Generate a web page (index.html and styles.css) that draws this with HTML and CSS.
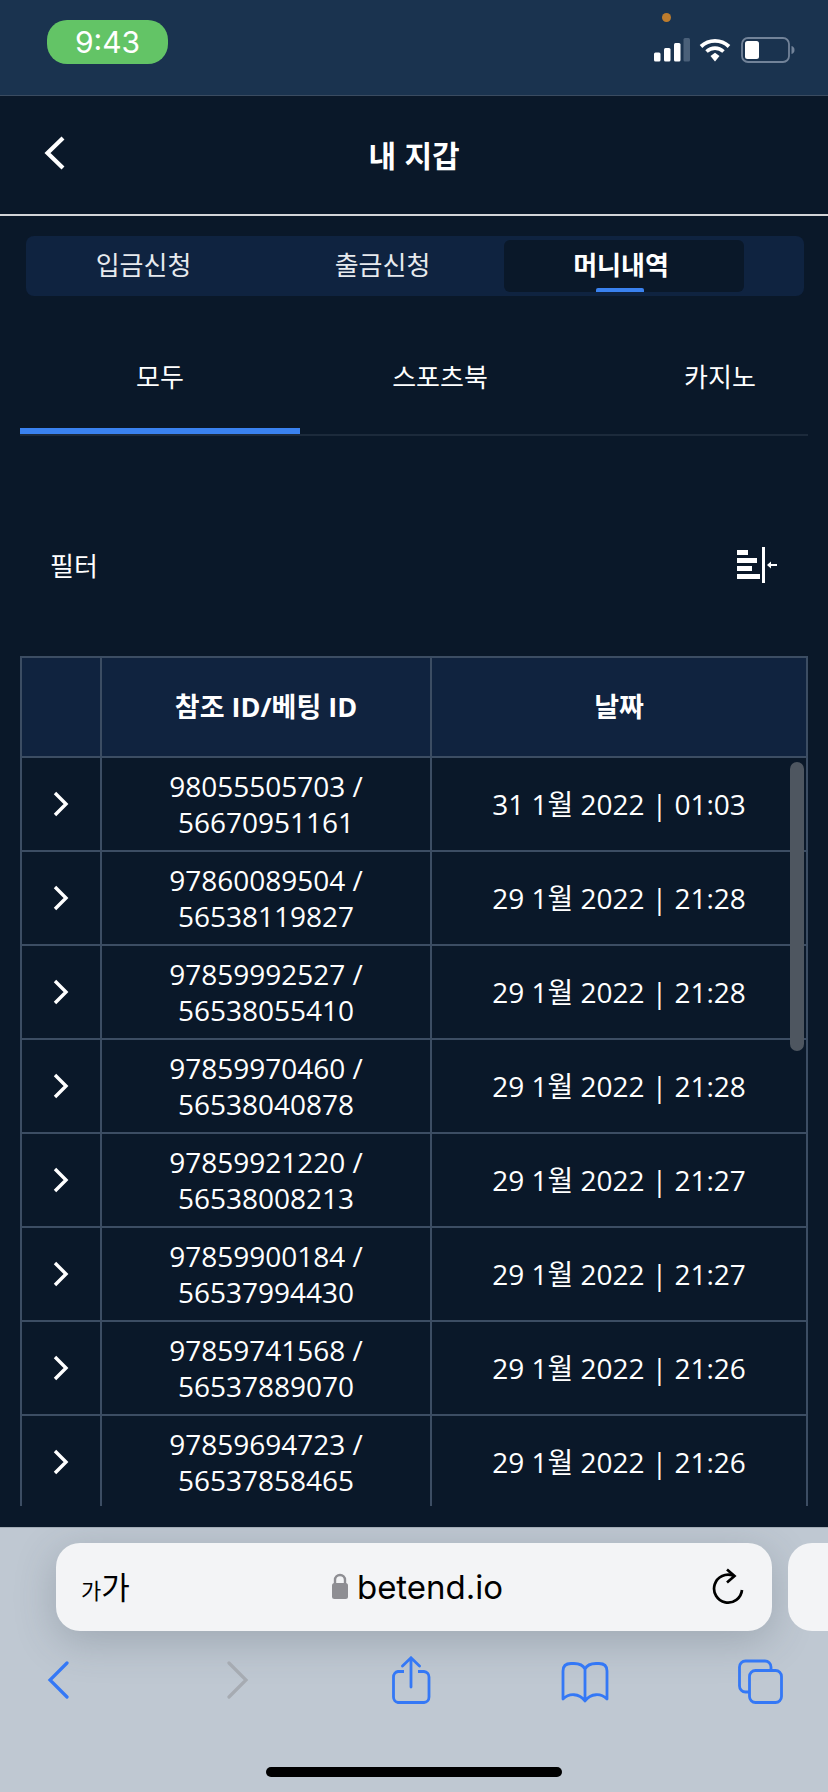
FILE: index.html
```html
<!DOCTYPE html>
<html lang="ko">
<head>
<meta charset="utf-8">
<title>내 지갑</title>
<link rel="stylesheet" href="styles.css">
</head>
<body>
<div class="page">
  <div class="status">
    <div class="time">9:43</div>
    <div class="status-right">
      <span class="mic-dot"></span>
      <div class="status-icons">
        <svg class="ic-signal" width="36" height="24" viewBox="0 0 36 24"><rect x="0" y="14.500" width="6.500" height="9" rx="1.500" fill="#fff"/><rect x="10" y="10" width="6.500" height="13.500" rx="1.500" fill="#fff"/><rect x="20" y="5" width="6.500" height="18.500" rx="1.500" fill="#fff"/><rect x="29.500" y="0" width="6.500" height="23.500" rx="1.500" fill="#4a6079"/></svg>
        <svg class="ic-wifi" width="32" height="24" viewBox="0 0 32 24"><path d="M2 8.500C10 1 22 1 30 8.500" fill="none" stroke="#fff" stroke-width="3.800"/><path d="M7.500 13.500C12.500 9 19.500 9 24.500 13.500" fill="none" stroke="#fff" stroke-width="3.600"/><path d="M11.500 18 16 14.800 20.500 18 16 23.500Z" fill="#fff"/></svg>
        <svg class="ic-batt" width="54" height="26" viewBox="0 0 54 26"><rect x="1" y="1" width="47" height="24" rx="6" fill="none" stroke="#728399" stroke-width="1.800"/><rect x="4" y="4" width="14" height="18" rx="2.500" fill="#fff"/><path d="M50.500 9c2 .5 3 2 3 4s-1 3.500-3 4z" fill="#728399"/></svg>
      </div>
    </div>
  </div>

  <header class="title-bar">
    <svg class="ic-back" width="22" height="34" viewBox="0 0 22 34"><path d="M19 2 3.500 17 19 32" fill="none" stroke="#fff" stroke-width="4.200"/></svg>
    <h1 class="title">내 지갑</h1>
  </header>

  <nav class="seg">
    <div class="seg-item">입금신청</div>
    <div class="seg-item">출금신청</div>
    <div class="seg-item seg-active">머니내역<span class="seg-mark"></span></div>
  </nav>

  <nav class="subtabs">
    <div class="subtab subtab-active">모두</div>
    <div class="subtab">스포츠북</div>
    <div class="subtab">카지노</div>
  </nav>

  <div class="filter">
    <span class="filter-label">필터</span>
    <svg class="ic-filter" width="40" height="36" viewBox="0 0 40 36"><g fill="#fff"><rect x="0" y="3" width="11" height="5"/><rect x="0" y="11" width="20" height="5"/><rect x="0" y="19" width="15" height="5"/><rect x="0" y="27" width="23" height="5"/><rect x="25" y="0" width="3" height="36"/><rect x="33" y="17" width="7" height="2"/><path d="M30 18 34 14.500V21.500Z"/></g></svg>
  </div>

  <div class="table-wrap">
    <table class="grid">
      <colgroup><col class="c1"><col class="c2"><col class="c3"></colgroup>
      <thead>
        <tr><th></th><th>참조 ID/베팅 ID</th><th>날짜</th></tr>
      </thead>
      <tbody>
        <tr><td><svg class="ic-row" width="16" height="26" viewBox="0 0 16 26"><path d="M2 2 13 13 2 24" fill="none" stroke="#fff" stroke-width="3.400"/></svg></td><td>98055505703 /<br>56670951161</td><td>31 1월 2022 | 01:03</td></tr>
        <tr><td><svg class="ic-row" width="16" height="26" viewBox="0 0 16 26"><path d="M2 2 13 13 2 24" fill="none" stroke="#fff" stroke-width="3.400"/></svg></td><td>97860089504 /<br>56538119827</td><td>29 1월 2022 | 21:28</td></tr>
        <tr><td><svg class="ic-row" width="16" height="26" viewBox="0 0 16 26"><path d="M2 2 13 13 2 24" fill="none" stroke="#fff" stroke-width="3.400"/></svg></td><td>97859992527 /<br>56538055410</td><td>29 1월 2022 | 21:28</td></tr>
        <tr><td><svg class="ic-row" width="16" height="26" viewBox="0 0 16 26"><path d="M2 2 13 13 2 24" fill="none" stroke="#fff" stroke-width="3.400"/></svg></td><td>97859970460 /<br>56538040878</td><td>29 1월 2022 | 21:28</td></tr>
        <tr><td><svg class="ic-row" width="16" height="26" viewBox="0 0 16 26"><path d="M2 2 13 13 2 24" fill="none" stroke="#fff" stroke-width="3.400"/></svg></td><td>97859921220 /<br>56538008213</td><td>29 1월 2022 | 21:27</td></tr>
        <tr><td><svg class="ic-row" width="16" height="26" viewBox="0 0 16 26"><path d="M2 2 13 13 2 24" fill="none" stroke="#fff" stroke-width="3.400"/></svg></td><td>97859900184 /<br>56537994430</td><td>29 1월 2022 | 21:27</td></tr>
        <tr><td><svg class="ic-row" width="16" height="26" viewBox="0 0 16 26"><path d="M2 2 13 13 2 24" fill="none" stroke="#fff" stroke-width="3.400"/></svg></td><td>97859741568 /<br>56537889070</td><td>29 1월 2022 | 21:26</td></tr>
        <tr><td><svg class="ic-row" width="16" height="26" viewBox="0 0 16 26"><path d="M2 2 13 13 2 24" fill="none" stroke="#fff" stroke-width="3.400"/></svg></td><td>97859694723 /<br>56537858465</td><td>29 1월 2022 | 21:26</td></tr>
      </tbody>
    </table>
    <div class="scrollbar"></div>
  </div>

  <div class="browser">
    <div class="url-row">
      <div class="url-bar">
        <span class="aa"><span class="aa-small">가</span>가</span>
        <div class="url">
          <svg class="ic-lock" width="18" height="26" viewBox="0 0 18 26"><path d="M4 11V7a5 5 0 0 1 10 0v4" fill="none" stroke="#8e8e93" stroke-width="2.400"/><rect x="1" y="10" width="16" height="16" rx="2.500" fill="#8e8e93"/></svg>
          <span>betend.io</span>
        </div>
        <svg class="ic-reload" width="32" height="38" viewBox="0 0 32 38"><path d="M21.500 8.700A14 14 0 1 0 30 23" fill="none" stroke="#000" stroke-width="2.700"/><path d="M15 2.500 22.500 9 15 15.500" fill="none" stroke="#000" stroke-width="2.700"/></svg>
      </div>
      <div class="url-next"></div>
    </div>
    <div class="toolbar">
      <svg class="t-back" width="22" height="38" viewBox="0 0 22 38"><path d="M20 2 3 19 20 36" fill="none" stroke="#3478f6" stroke-width="3.200" stroke-linecap="round"/></svg>
      <svg class="t-fwd" width="22" height="38" viewBox="0 0 22 38"><path d="M2 2 19 19 2 36" fill="none" stroke="#a6abb2" stroke-width="3.200" stroke-linecap="round"/></svg>
      <svg class="t-share" width="40" height="48" viewBox="0 0 40 48"><path d="M13 15.500H7A5.500 5.500 0 0 0 2.500 21v20A5.500 5.500 0 0 0 7 46.500h26a5.500 5.500 0 0 0 5-5.500V21a5.500 5.500 0 0 0-5-5.500h-6" fill="none" stroke="#3478f6" stroke-width="2.800"/><path d="M20 31V2M11.500 10 20 1.800 28.500 10" fill="none" stroke="#3478f6" stroke-width="2.800" stroke-linecap="round"/></svg>
      <svg class="t-book" width="48" height="42" viewBox="0 0 48 42"><path d="M24 8C22 4 18 2.500 13 2.500H10C5 2.500 2 5 2 10V38C8 32 18 32 24 40 30 32 40 32 46 38V10C46 5 43 2.500 38 2.500H35C30 2.500 26 4 24 8ZM24 8V40" fill="none" stroke="#3478f6" stroke-width="2.800" stroke-linejoin="round" stroke-linecap="round"/></svg>
      <svg class="t-tabs" width="45" height="46" viewBox="0 0 45 46"><path d="M11 33H7.500A6 6 0 0 1 1.500 27V8A6 6 0 0 1 7.500 2H27A6 6 0 0 1 33 8V11" fill="none" stroke="#3478f6" stroke-width="2.800"/><rect x="11.500" y="11.500" width="32" height="32" rx="6" fill="none" stroke="#3478f6" stroke-width="2.800"/></svg>
    </div>
    <div class="home-bar"></div>
  </div>
</div>
</body>
</html>
```

FILE: styles.css
```css
* { box-sizing: border-box; }
html, body { margin: 0; padding: 0; }
body {
  width: 828px;
  height: 1792px;
  overflow: hidden;
  background: #0a1829;
  color: #fff;
  font-family: "Open Sans", "Noto Sans CJK KR", sans-serif;
}
.page {
  width: 828px;
  height: 1792px;
  display: flex;
  flex-direction: column;
  overflow: hidden;
}

/* status bar */
.status {
  height: 96px;
  background: #1a334f;
  border-bottom: 1px solid #3a4b60;
  display: flex;
  justify-content: space-between;
  padding: 20px 0 0 47px;
  flex: none;
}
.time {
  width: 121px;
  height: 44px;
  border-radius: 20px;
  background: #63c466;
  font: 400 30px/44px Inter, sans-serif;
  text-align: center;
}
.status-right {
  position: relative;
  width: 198px;
}
.mic-dot {
  position: absolute;
  left: 32px;
  top: -7px;
  width: 9px;
  height: 9px;
  border-radius: 50%;
  background: #bd7c2d;
}
.status-icons {
  display: flex;
  align-items: center;
  gap: 8px;
  margin-top: 17px;
  margin-left: 24px;
}
.ic-wifi { margin-left: 1px; }
.ic-batt { margin-left: 2px; }

/* title */
.title-bar {
  height: 120px;
  border-bottom: 2px solid #d2d4d7;
  display: flex;
  align-items: center;
  justify-content: center;
  position: relative;
  flex: none;
}
.ic-back {
  position: absolute;
  left: 44px;
  top: 40px;
}
.title {
  margin: 0;
  font: 700 30px/40px "Noto Sans CJK KR", sans-serif;
  transform: translateY(-1px);
}

/* segmented tabs */
.seg {
  margin: 20px 24px 0 26px;
  height: 60px;
  border-radius: 8px;
  background: #0f2340;
  padding: 4px 60px 4px 0;
  display: grid;
  grid-template-columns: 238px 240px 240px;
  flex: none;
}
.seg-item {
  position: relative;
  font: 400 26px/48px "Noto Sans CJK KR", sans-serif;
  text-align: center;
  color: #e7eaee;
  padding-right: 3px;
}
.seg-active {
  background: #0a1829;
  border-radius: 6px;
  font-weight: 700;
  color: #fff;
  padding-right: 6px;
}
.seg-mark {
  position: absolute;
  left: 92px;
  bottom: 0;
  width: 48px;
  height: 4px;
  border-radius: 2px 2px 0 0;
  background: #3a82f0;
}

/* sub tabs */
.subtabs {
  margin: 0 20px;
  height: 140px;
  display: flex;
  overflow: hidden;
  border-bottom: 2px solid #1c2a3b;
  flex: none;
}
.subtab {
  flex: 0 0 280px;
  height: 138px;
  padding-top: 60px;
  font: 400 26px/40px "Noto Sans CJK KR", sans-serif;
  text-align: center;
}
.subtab-active { border-bottom: 6px solid #3a82f0; }

/* filter */
.filter {
  margin-top: 111px;
  height: 36px;
  padding: 0 52px 0 50px;
  display: flex;
  align-items: center;
  justify-content: space-between;
  font: 400 26px/36px "Noto Sans CJK KR", sans-serif;
  flex: none;
}
.ic-filter { margin-right: -1px; }

/* table */
.table-wrap {
  position: relative;
  margin: 73px 20px 0;
  height: 850px;
  overflow: hidden;
  flex: none;
}
.grid {
  width: 788px;
  table-layout: fixed;
  border-collapse: separate;
  border-spacing: 0;
  font-size: 28px;
  line-height: 36px;
  font-weight: 400;
}
.c1 { width: 82px; }
.c2 { width: 330px; }
.c3 { width: 376px; }
.grid th, .grid td {
  border-right: 2px solid #3c4d63;
  border-bottom: 2px solid #3c4d63;
  padding: 0;
  text-align: center;
  vertical-align: middle;
}
.grid th:first-child, .grid td:first-child { border-left: 2px solid #3c4d63; }
.grid th {
  height: 102px;
  border-top: 2px solid #3c4d63;
  background: #10233f;
  font-weight: 700;
  font-size: 27px;
}
.grid td { height: 94px; }
.ic-row { display: block; margin: 0 auto; }
.scrollbar {
  position: absolute;
  top: 106px;
  right: 4px;
  width: 14px;
  height: 289px;
  border-radius: 7px;
  background: #4e5660;
}

/* browser chrome */
.browser {
  margin-top: 21px;
  flex: 1;
  background: #bfc8d2;
  border-top: 1px solid #a3acb6;
  position: relative;
  overflow: hidden;
}
.url-row {
  display: flex;
  gap: 16px;
  padding: 15px 0 0 56px;
}
.url-bar {
  flex: 0 0 716px;
  height: 88px;
  border-radius: 24px;
  background: #f3f4f6;
  box-shadow: 0 10px 40px rgba(60, 70, 85, 0.25);
  display: flex;
  align-items: center;
  justify-content: space-between;
  padding: 0 28px 0 25px;
}
.url-next {
  flex: 0 0 60px;
  height: 88px;
  border-radius: 24px 0 0 24px;
  background: #f3f4f6;
}
.aa {
  width: 50px;
  color: #000;
  font: 400 31px/40px "Noto Sans CJK KR", sans-serif;
  white-space: nowrap;
}
.aa-small { font-size: 22px; }
.url {
  display: flex;
  align-items: center;
  gap: 8px;
  color: #000;
  font: 400 33px/44px Inter, sans-serif;
  margin-left: -9px;
}
.ic-lock { margin-top: -2px; }
.ic-reload { margin-top: -3px; }
.toolbar {
  display: flex;
  align-items: flex-start;
  padding: 25px 0 0 47px;
  height: 88px;
}
.t-back { margin-top: 5px; }
.t-fwd { margin-top: 5px; margin-left: 158px; }
.t-share { margin-left: 142px; }
.t-book { margin-top: 5px; margin-left: 130px; }
.t-tabs { margin-top: 3px; margin-left: 129px; }
.home-bar {
  width: 296px;
  height: 10px;
  margin: 48px auto 0;
  border-radius: 5px;
  background: #000;
}
```
